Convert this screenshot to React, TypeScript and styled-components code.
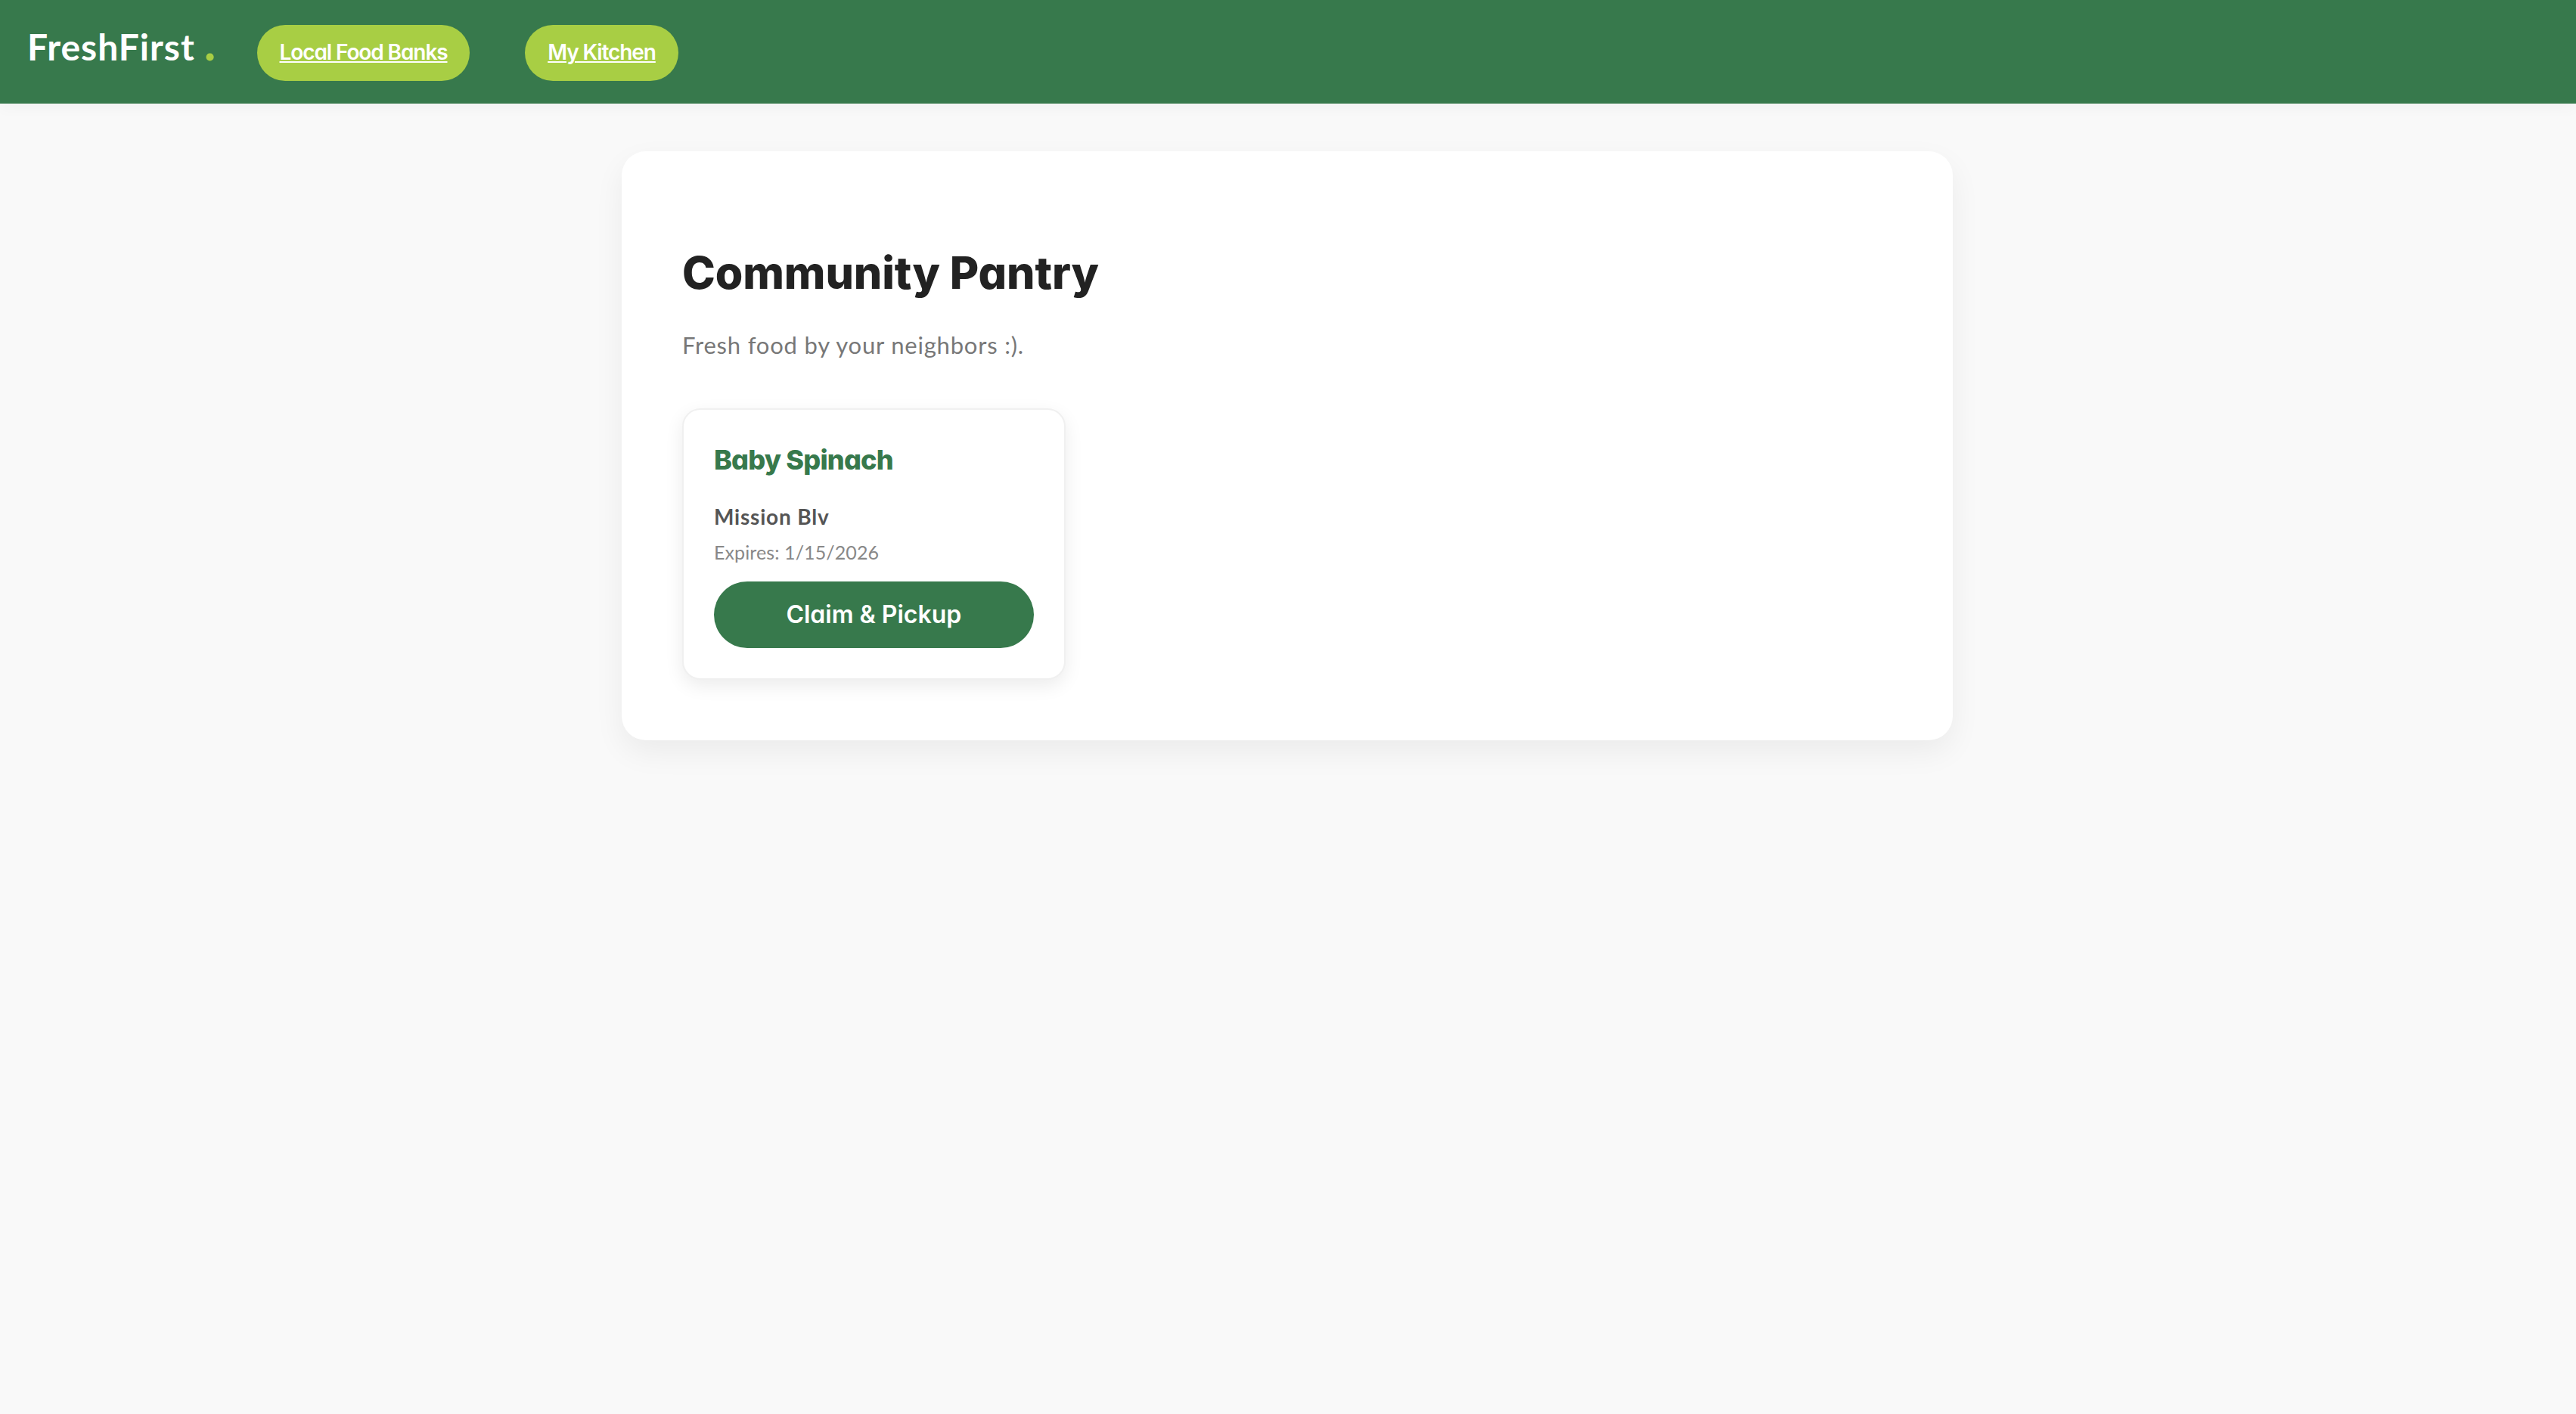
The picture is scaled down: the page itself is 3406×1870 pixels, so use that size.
import React from 'react';
import styled, { createGlobalStyle } from 'styled-components';

const green = '#37794c';
const lime = '#a8ce44';

const display = `'Inter', 'Liberation Sans', sans-serif`;
const body = `'Lato', 'Open Sans', sans-serif`;

const GlobalStyle = createGlobalStyle`
  * { box-sizing: border-box; }
  body {
    margin: 0;
    min-height: 100vh;
    background: #f9f9f9;
    font-family: ${body};
    font-optical-sizing: none;
    /* single-storey a */
    font-feature-settings: 'cv11';
  }
  h1, h3, p { margin: 0; }
`;

const Nav = styled.nav`
  display: flex;
  align-items: flex-start;
  height: 137px;
  padding: 33px 36px;
  background: ${green};
  box-shadow: 0 4px 20px rgba(0, 0, 0, 0.04);
`;

const Brand = styled.div`
  display: flex;
  align-items: baseline;
  width: 304px;
  height: 56px;
  font-size: 48px;
  font-weight: 700;
  line-height: 57px;
  letter-spacing: 1px;
  white-space: nowrap;
  color: #fff;
`;

const Dot = styled.span`
  margin-left: 12px;
  font-size: 66px;
  line-height: 0;
  color: ${lime};
`;

const NavLinks = styled.div`
  display: flex;
  gap: 73px;
`;

const NavLink = styled.a<{ $width: number }>`
  width: ${p => p.$width}px;
  height: 74px;
  border-radius: 50px;
  background: ${lime};
  color: #fff;
  font-family: ${display};
  font-size: 28px;
  font-weight: 600;
  line-height: 73px;
  letter-spacing: -1.1px;
  text-align: center;
  text-decoration: underline;
  text-decoration-thickness: 2px;
  text-underline-offset: 2px;
  white-space: nowrap;
`;

const Panel = styled.main`
  width: 1760px;
  margin: 63px 0 0 calc(50% - 881px);
  padding: 80px;
  border-radius: 32px;
  background: #fff;
  box-shadow: 0 16px 40px rgba(0, 0, 0, 0.06);
`;

const Title = styled.h1`
  padding-top: 39px;
  font-family: ${display};
  font-size: 59px;
  font-weight: 800;
  line-height: 84px;
  letter-spacing: -0.1px;
  color: #222;
`;

const Subtitle = styled.p`
  margin: 31px 0 62px;
  font-size: 31px;
  line-height: 44px;
  letter-spacing: 0.8px;
  color: #777;
`;

const Grid = styled.div`
  display: grid;
  grid-template-columns: repeat(3, 1fr);
  gap: 40px;
`;

const Card = styled.div`
  display: flex;
  flex-direction: column;
  padding: 40px;
  border: 2px solid #f0f0f0;
  border-radius: 24px;
  background: #fff;
  box-shadow: 0 8px 24px rgba(0, 0, 0, 0.08);
`;

const FoodName = styled.h3`
  font-family: ${display};
  font-size: 36px;
  font-weight: 800;
  line-height: 52px;
  letter-spacing: -0.8px;
  color: ${green};
`;

const Place = styled.p`
  margin-top: 29px;
  font-size: 28px;
  font-weight: 700;
  line-height: 40px;
  letter-spacing: 0.8px;
  color: #555;
`;

const Expires = styled.p`
  margin-top: 9px;
  font-size: 25px;
  line-height: 36px;
  letter-spacing: 0.1px;
  color: #888;
`;

const ClaimButton = styled.button`
  height: 88px;
  margin-top: 21px;
  padding: 0 0 2px;
  border: none;
  border-radius: 50px;
  background: ${green};
  color: #fff;
  font-family: ${display};
  font-size: 32px;
  font-weight: 600;
  letter-spacing: 0;
  font-feature-settings: inherit;
  font-optical-sizing: inherit;
  cursor: pointer;
`;

const links: { label: string, width: number }[] = [
  { label: 'Local Food Banks', width: 281 },
  { label: 'My Kitchen', width: 203 },
];

const items: { name: string, place: string, expires: string }[] = [
  { name: 'Baby Spinach', place: 'Mission Blv', expires: '1/15/2026' },
];

export default function App () {
  return (
    <>
      <GlobalStyle />
      <Nav>
        <Brand>FreshFirst<Dot>.</Dot></Brand>
        <NavLinks>
          {links.map(link => (
            <NavLink key={link.label} $width={link.width} href="#">{link.label}</NavLink>
          ))}
        </NavLinks>
      </Nav>
      <Panel>
        <Title>Community Pantry</Title>
        <Subtitle>Fresh food by your neighbors :).</Subtitle>
        <Grid>
          {items.map(item => (
            <Card key={item.name}>
              <FoodName>{item.name}</FoodName>
              <Place>{item.place}</Place>
              <Expires>Expires: {item.expires}</Expires>
              <ClaimButton>Claim &amp; Pickup</ClaimButton>
            </Card>
          ))}
        </Grid>
      </Panel>
    </>
  );
}
